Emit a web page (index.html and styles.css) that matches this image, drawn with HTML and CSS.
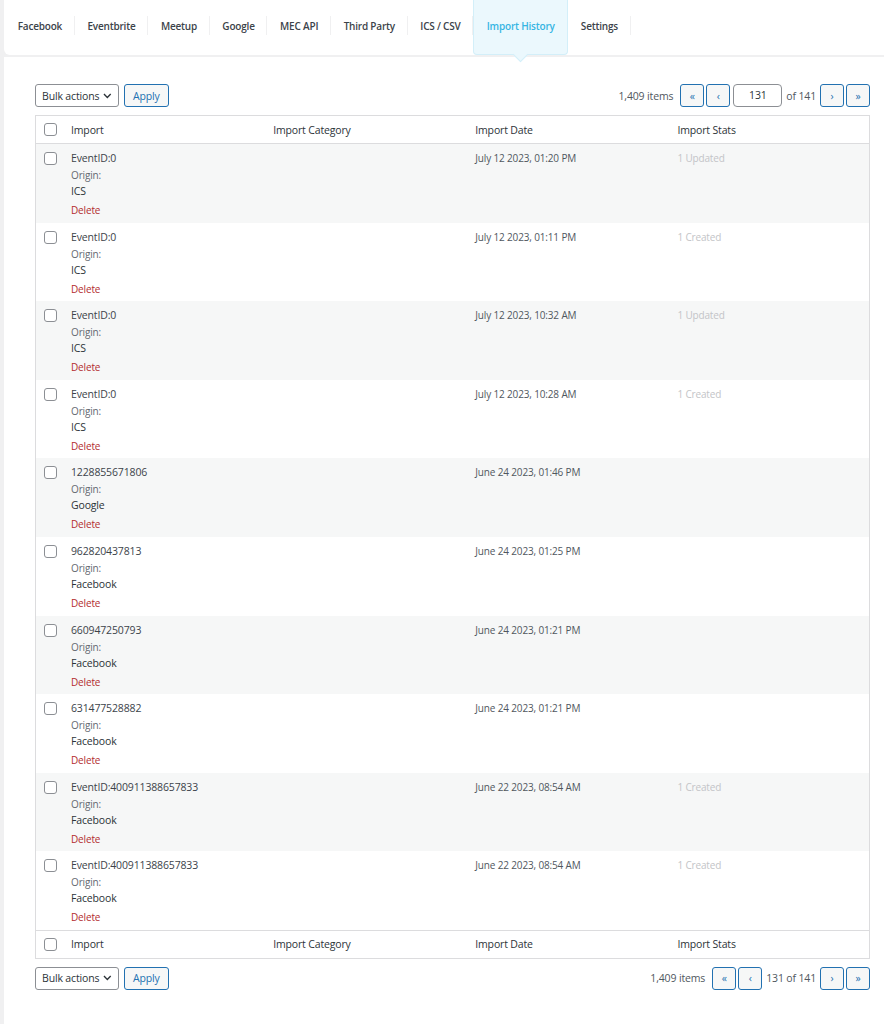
FILE: index.html
```html
<!DOCTYPE html>
<html>
<head>
<meta charset="UTF-8">
<meta name="viewport" content="width=device-width, initial-scale=1.0">
<title>Import History</title>
<link rel="stylesheet" href="styles.css">
</head>
<body>
<div class="wrap">
  <div class="tabs">
    <a class="tab">Facebook</a>
    <a class="tab">Eventbrite</a>
    <a class="tab">Meetup</a>
    <a class="tab">Google</a>
    <a class="tab">MEC API</a>
    <a class="tab">Third Party</a>
    <a class="tab">ICS / CSV</a>
    <a class="tab active">Import History</a>
    <a class="tab">Settings</a>
  </div>

  <div class="content">
    <div class="tablenav">
      <div class="actions">
        <div class="select">Bulk actions <svg width="9" height="6" viewBox="0 0 9 6"><path d="M1 1l3.5 3.5L8 1" fill="none" stroke="#2c3338" stroke-width="1.4"/></svg></div>
        <button class="button">Apply</button>
      </div>
      <div class="pages">
        <span class="count">1,409 items</span>
        <span class="pbtn">&laquo;</span>
        <span class="pbtn">&lsaquo;</span>
        <span class="pinput">131</span>
        <span class="of">of 141</span>
        <span class="pbtn">&rsaquo;</span>
        <span class="pbtn">&raquo;</span>
      </div>
    </div>

    <table class="list">
      <thead>
        <tr>
          <th class="check"><span class="cb"></span></th>
          <th>Import</th>
          <th>Import Category</th>
          <th>Import Date</th>
          <th>Import Stats</th>
        </tr>
      </thead>
      <tbody id="rows"></tbody>
      <tfoot>
        <tr>
          <th class="check"><span class="cb"></span></th>
          <th>Import</th>
          <th>Import Category</th>
          <th>Import Date</th>
          <th>Import Stats</th>
        </tr>
      </tfoot>
    </table>

    <div class="tablenav bottom">
      <div class="actions">
        <div class="select">Bulk actions <svg width="9" height="6" viewBox="0 0 9 6"><path d="M1 1l3.5 3.5L8 1" fill="none" stroke="#2c3338" stroke-width="1.4"/></svg></div>
        <button class="button">Apply</button>
      </div>
      <div class="pages">
        <span class="count">1,409 items</span>
        <span class="pbtn">&laquo;</span>
        <span class="pbtn">&lsaquo;</span>
        <span class="of">131 of 141</span>
        <span class="pbtn">&rsaquo;</span>
        <span class="pbtn">&raquo;</span>
      </div>
    </div>
  </div>
</div>

<script>
  const imports = [
    ['EventID:0', 'ICS', 'July 12 2023, 01:20 PM', '1 Updated'],
    ['EventID:0', 'ICS', 'July 12 2023, 01:11 PM', '1 Created'],
    ['EventID:0', 'ICS', 'July 12 2023, 10:32 AM', '1 Updated'],
    ['EventID:0', 'ICS', 'July 12 2023, 10:28 AM', '1 Created'],
    ['1228855671806', 'Google', 'June 24 2023, 01:46 PM', ''],
    ['962820437813', 'Facebook', 'June 24 2023, 01:25 PM', ''],
    ['660947250793', 'Facebook', 'June 24 2023, 01:21 PM', ''],
    ['631477528882', 'Facebook', 'June 24 2023, 01:21 PM', ''],
    ['EventID:400911388657833', 'Facebook', 'June 22 2023, 08:54 AM', '1 Created'],
    ['EventID:400911388657833', 'Facebook', 'June 22 2023, 08:54 AM', '1 Created']
  ];

  const tbody = document.getElementById('rows');
  imports.forEach(function (item) {
    const tr = document.createElement('tr');
    tr.innerHTML =
      '<td class="check"><span class="cb"></span></td>' +
      '<td><div class="title">' + item[0] + '</div>' +
      '<div class="label">Origin:</div>' +
      '<div class="origin">' + item[1] + '</div>' +
      '<div class="row-actions"><a class="delete">Delete</a></div></td>' +
      '<td></td>' +
      '<td class="date">' + item[2] + '</td>' +
      '<td class="stats">' + item[3] + '</td>';
    tbody.appendChild(tr);
  });
</script>
</body>
</html>
```

FILE: styles.css
```css
body {
  margin: 0;
  background: #f0f0f1;
  font-family: "Open Sans", "Noto Sans", sans-serif;
  font-size: 10.5px;
  letter-spacing: -0.15px;
  color: #3c434a;
}

.wrap {
  margin-left: 4px;
}

.tabs {
  display: flex;
  height: 55px;
  background: #fff;
  border-bottom-left-radius: 6px;
  padding-left: 1px;
  margin-bottom: 2px;
}

.tab {
  position: relative;
  display: flex;
  align-items: center;
  padding: 0 12.7px 4px;
  color: #3c434a;
  font-weight: 600;
  font-size: 10px;
  letter-spacing: -0.2px;
  cursor: pointer;
}

.tab::after {
  content: "";
  position: absolute;
  right: 0;
  top: 16px;
  height: 19px;
  border-right: 1px solid #f0f0f1;
}

.tab.active {
  background: #ebf8fd;
  color: #36b5e3;
  border: 1px solid #d3eff9;
  border-top: none;
  border-radius: 0 0 4px 4px;
  padding: 0 12.5px 3px;
}

.tab.active::after {
  display: none;
}

.tab.active::before {
  content: "";
  position: absolute;
  left: 50%;
  bottom: -6px;
  width: 10px;
  height: 10px;
  margin-left: -6px;
  background: #ebf8fd;
  border-right: 1px solid #d3eff9;
  border-bottom: 1px solid #d3eff9;
  transform: rotate(45deg);
}

.content {
  background: #fff;
  padding: 27px 14px 40px 31px;
  min-height: 930px;
}

.tablenav {
  display: flex;
  justify-content: space-between;
  align-items: center;
  height: 23px;
  margin-bottom: 8px;
}

.tablenav.bottom {
  margin: 8px 0 0;
}

.actions {
  display: flex;
  gap: 5px;
}

.select {
  display: flex;
  align-items: center;
  gap: 4px;
  box-sizing: border-box;
  width: 84px;
  height: 23px;
  padding: 0 6px;
  border: 1px solid #8c8f94;
  border-radius: 3px;
  color: #2c3338;
  white-space: nowrap;
}

.button {
  height: 23px;
  padding: 0 8px;
  font-family: inherit;
  font-size: 10.5px;
  letter-spacing: -0.15px;
  color: #2271b1;
  background: #f6f7f7;
  border: 1px solid #2271b1;
  border-radius: 3px;
}

.pages {
  display: flex;
  align-items: center;
  gap: 2px;
  color: #50575e;
}

.count {
  margin-right: 5px;
}

.pbtn {
  display: flex;
  align-items: center;
  justify-content: center;
  box-sizing: border-box;
  width: 24px;
  height: 23px;
  border: 1px solid #2271b1;
  border-radius: 3px;
  background: #f6f7f7;
  color: #2271b1;
}

.pinput {
  box-sizing: border-box;
  width: 49px;
  height: 23px;
  line-height: 21px;
  text-align: center;
  border: 1px solid #8c8f94;
  border-radius: 4px;
  color: #2c3338;
  margin-left: 1px;
}

.of {
  margin: 0 2px;
}

.list {
  width: 100%;
  border-collapse: collapse;
  border: 1px solid #dcdcde;
  table-layout: fixed;
}

.list th {
  height: 27px;
  padding: 0 0 0 10px;
  text-align: left;
  font-weight: 400;
  color: #2c3338;
}

.list thead th {
  border-bottom: 1px solid #dcdcde;
}

.list tfoot th {
  border-top: 1px solid #dcdcde;
}

.list th.check,
.list td.check {
  width: 17px;
  padding: 0 0 0 8px;
}

.list td {
  vertical-align: top;
  padding: 6px 0 4.6px 10px;
  color: #50575e;
  line-height: 16px;
}

.list td.check {
  padding-top: 8px;
}

.list tbody tr:nth-child(odd) {
  background: #f6f7f7;
}

.cb {
  display: block;
  width: 13px;
  height: 13px;
  box-sizing: border-box;
  border: 1px solid #8c8f94;
  border-radius: 3px;
  background: #fff;
}

.title {
  color: #3c434a;
}

.label {
  margin-top: 1px;
  color: #646970;
  font-size: 10px;
  line-height: 17px;
}

.origin {
  color: #2c3338;
  line-height: 15px;
}

.row-actions {
  padding-top: 3px;
}

.delete {
  color: #b32d2e;
  font-size: 10px;
}

.list td.date {
  color: #50575e;
  font-size: 10px;
}

.list td.stats {
  color: #c3c4c7;
  font-size: 10px;
}
```
